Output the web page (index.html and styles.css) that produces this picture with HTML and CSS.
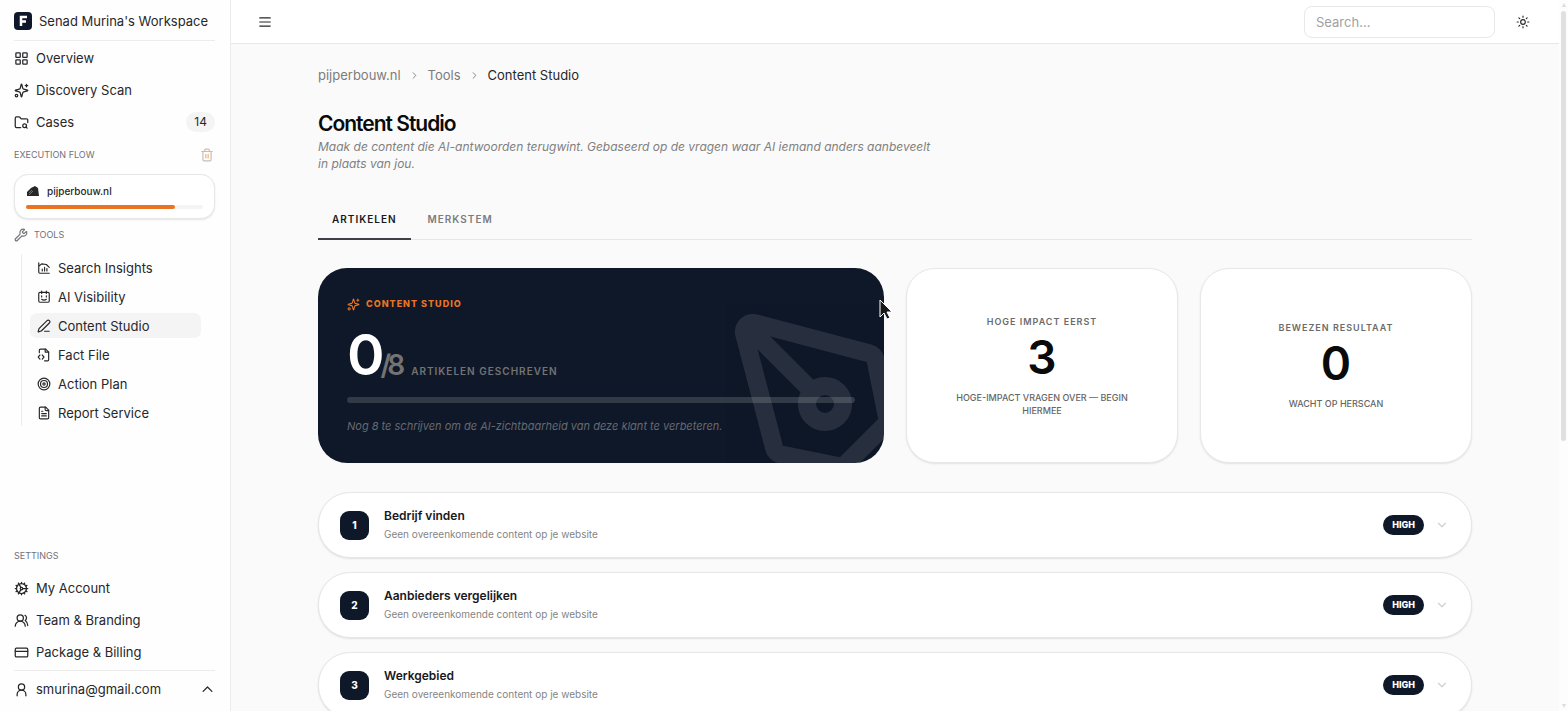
FILE: index.html
```
<!DOCTYPE html>
<html lang="nl">
<head>
    <meta charset="UTF-8">
    <meta name="viewport" content="width=device-width, initial-scale=1.0">
    <title>Content Studio</title>
    <link rel="stylesheet" href="styles.css">
</head>
<body>

    <!-- icons that are used more than once -->
    <svg class="sprite" aria-hidden="true">
        <symbol id="sparkles" viewBox="0 0 24 24">
            <path d="M9.937 15.5A2 2 0 0 0 8.5 14.063l-6.135-1.582a.5.5 0 0 1 0-.962L8.5 9.936A2 2 0 0 0 9.937 8.5l1.582-6.135a.5.5 0 0 1 .963 0L14.063 8.5A2 2 0 0 0 15.5 9.937l6.135 1.581a.5.5 0 0 1 0 .964L15.5 14.063a2 2 0 0 0-1.437 1.437l-1.582 6.135a.5.5 0 0 1-.963 0z"/>
            <path d="M20 2v4M22 4h-4"/><circle cx="4" cy="20" r="2"/>
        </symbol>
        <symbol id="chevron-right" viewBox="0 0 24 24"><path d="m9 18 6-6-6-6"/></symbol>
        <symbol id="chevron-down" viewBox="0 0 24 24"><path d="m6 9 6 6 6-6"/></symbol>
    </svg>

    <div class="app">

        <!-- sidebar -->
        <aside class="sidebar">
            <div class="workspace">
                <svg class="logo" viewBox="0 0 18 18" aria-hidden="true">
                    <rect width="18" height="18" rx="4" fill="#0f172a"/>
                    <path d="M7 14V5h6M7 9.500h5" fill="none" stroke="#fff" stroke-width="2.500"/>
                </svg>
                <span>Senad Murina's Workspace</span>
            </div>

            <nav class="nav">
                <a href="#" class="nav-link">
                    <svg class="icon" viewBox="0 0 24 24"><rect x="3" y="3" width="7" height="7" rx="1"/><rect x="14" y="3" width="7" height="7" rx="1"/><rect x="14" y="14" width="7" height="7" rx="1"/><rect x="3" y="14" width="7" height="7" rx="1"/></svg>
                    Overview
                </a>
                <a href="#" class="nav-link">
                    <svg class="icon"><use href="#sparkles"/></svg>
                    Discovery Scan
                </a>
                <a href="#" class="nav-link">
                    <svg class="icon" viewBox="0 0 24 24"><path d="M10.700 20H4a2 2 0 0 1-2-2V5a2 2 0 0 1 2-2h3.900a2 2 0 0 1 1.690.9l.81 1.200a2 2 0 0 0 1.670.9H20a2 2 0 0 1 2 2v4.100"/><path d="m21 21-1.900-1.900"/><circle cx="17" cy="17" r="3"/></svg>
                    Cases
                    <span class="count">14</span>
                </a>
            </nav>

            <div class="section-head">
                <span>EXECUTION FLOW</span>
                <button type="button" class="icon-btn trash" aria-label="Verwijderen">
                    <svg class="icon" viewBox="0 0 24 24"><path d="M3 6h18M19 6v14a2 2 0 0 1-2 2H7a2 2 0 0 1-2-2V6M8 6V4a2 2 0 0 1 2-2h4a2 2 0 0 1 2 2v2"/><path class="trash-bars" d="M10 11v6M14 11v6"/></svg>
                </button>
            </div>

            <a href="#" class="case-card">
                <span class="case-name">
                    <svg class="case-logo" viewBox="0 0 14 12" aria-hidden="true"><path d="M1 11V7l4-4 4-2 3 2 1 8z" fill="#27272a"/><path d="M3 8l3-3M3 10l4-4" stroke="#71717a" stroke-width="1"/></svg>
                    pijperbouw.nl
                </span>
                <span class="case-bar"><span class="case-fill"></span></span>
            </a>

            <div class="section-head tools-head">
                <svg class="icon" viewBox="0 0 24 24"><path d="M14.700 6.300a1 1 0 0 0 0 1.400l1.600 1.600a1 1 0 0 0 1.400 0l3.106-3.105c.32-.322.863-.22.983.218a6 6 0 0 1-8.259 7.057l-7.910 7.910a1 1 0 0 1-2.999-3l7.910-7.910a6 6 0 0 1 7.057-8.259c.438.12.54.662.219.984z"/></svg>
                <span>TOOLS</span>
            </div>

            <nav class="tree">
                <a href="#" class="tree-link">
                    <svg class="icon" viewBox="0 0 24 24"><path d="M3 3v16a2 2 0 0 0 2 2h16M3 9l5-4 8 1 5 5M9 17v-3M13 17v-6M17 17v-4"/></svg>
                    Search Insights
                </a>
                <a href="#" class="tree-link">
                    <svg class="icon" viewBox="0 0 24 24"><rect x="3" y="4" width="18" height="17" rx="2"/><path d="M8 2v4M16 2v4M8 10v2M16 10v2M8 16c2 1.500 6 1.500 8 0"/></svg>
                    AI Visibility
                </a>
                <a href="#" class="tree-link active">
                    <svg class="icon" viewBox="0 0 24 24"><path d="M13 21h8"/><path d="M21.174 6.812a1 1 0 0 0-3.986-3.987L3.842 16.174a2 2 0 0 0-.5.830l-1.321 4.352a.5.5 0 0 0 .623.622l4.353-1.320a2 2 0 0 0 .83-.497z"/></svg>
                    Content Studio
                </a>
                <a href="#" class="tree-link">
                    <svg class="icon" viewBox="0 0 24 24"><path d="M4 8V4a2 2 0 0 1 2-2h9l5 5v13a2 2 0 0 1-2 2h-5"/><path d="M14 2v5h6M5 12l-3 3.500L5 19M9 12l3 3.500L9 19"/></svg>
                    Fact File
                </a>
                <a href="#" class="tree-link">
                    <svg class="icon" viewBox="0 0 24 24"><circle cx="12" cy="12" r="10"/><circle cx="12" cy="12" r="6"/><circle cx="12" cy="12" r="2"/></svg>
                    Action Plan
                </a>
                <a href="#" class="tree-link">
                    <svg class="icon" viewBox="0 0 24 24"><path d="M15 2H6a2 2 0 0 0-2 2v16a2 2 0 0 0 2 2h12a2 2 0 0 0 2-2V7z"/><path d="M14 2v4a2 2 0 0 0 2 2h4M10 9H8M16 13H8M16 17H8"/></svg>
                    Report Service
                </a>
            </nav>

            <div class="sidebar-bottom">
                <div class="section-head">SETTINGS</div>
                <nav class="nav">
                    <a href="#" class="nav-link">
                        <svg class="icon" viewBox="0 0 24 24"><circle cx="12" cy="12" r="8"/><circle cx="12" cy="12" r="2"/><path d="M12 2v2M12 20v2M2 12h2M14 12h8M17 20.660l-1-1.730M11 10.270 7 3.340M20.660 17l-1.730-1M3.340 7l1.730 1M20.660 7l-1.730 1M3.340 17l1.730-1M17 3.340l-1 1.730M11 13.730l-4 6.930"/></svg>
                        My Account
                    </a>
                    <a href="#" class="nav-link">
                        <svg class="icon" viewBox="0 0 24 24"><path d="M18 21a8 8 0 0 0-16 0"/><circle cx="10" cy="8" r="5"/><path d="M22 20c0-3.370-2-6.500-4-8a5 5 0 0 0-.45-8.300"/></svg>
                        Team &amp; Branding
                    </a>
                    <a href="#" class="nav-link">
                        <svg class="icon" viewBox="0 0 24 24"><rect x="2" y="5" width="20" height="14" rx="2"/><path d="M2 10h20"/></svg>
                        Package &amp; Billing
                    </a>
                </nav>
                <button type="button" class="user">
                    <svg class="icon" viewBox="0 0 24 24"><circle cx="12" cy="8" r="5"/><path d="M5 22v-2a7 7 0 0 1 14 0v2"/></svg>
                    smurina@gmail.com
                    <svg class="icon user-caret" viewBox="0 0 24 24"><path d="m5 15 7-7 7 7"/></svg>
                </button>
            </div>
        </aside>

        <div class="page">
            <header class="topbar">
                <button type="button" class="icon-btn" aria-label="Menu">
                    <svg class="icon" viewBox="0 0 24 24"><path d="M3 5h18M3 12h18M3 19h18"/></svg>
                </button>
                <input type="search" class="search" placeholder="Search..." aria-label="Search">
                <button type="button" class="icon-btn" aria-label="Thema">
                    <svg class="icon" viewBox="0 0 24 24"><circle cx="12" cy="12" r="4"/><path d="M12 2v2M12 20v2M4.930 4.930l1.410 1.410M17.660 17.660l1.410 1.410M2 12h2M20 12h2M6.340 17.660l-1.410 1.410M19.070 4.930l-1.410 1.410"/></svg>
                </button>
            </header>

            <main class="content">
                <nav class="breadcrumb" aria-label="Breadcrumb">
                    <a href="#">pijperbouw.nl</a>
                    <svg class="icon"><use href="#chevron-right"/></svg>
                    <a href="#">Tools</a>
                    <svg class="icon"><use href="#chevron-right"/></svg>
                    <span class="current">Content Studio</span>
                </nav>

                <h1>Content Studio</h1>
                <p class="intro">Maak de content die AI-antwoorden terugwint. Gebaseerd op de vragen waar AI iemand anders aanbeveelt in plaats van jou.</p>

                <div class="tabs" role="tablist">
                    <button type="button" class="tab selected" role="tab" aria-selected="true">ARTIKELEN</button>
                    <button type="button" class="tab" role="tab" aria-selected="false">MERKSTEM</button>
                </div>

                <section class="stats">
                    <div class="hero">
                        <div class="hero-inner">
                            <svg class="hero-pen" viewBox="0 0 24 24" aria-hidden="true"><path d="M15.707 21.293a1 1 0 0 1-1.414 0l-1.586-1.586a1 1 0 0 1 0-1.414l5.586-5.586a1 1 0 0 1 1.414 0l1.586 1.586a1 1 0 0 1 0 1.414z"/><path d="m18 13-1.375-6.874a1 1 0 0 0-.746-.776L3.235 2.028a1 1 0 0 0-1.207 1.207L5.350 15.879a1 1 0 0 0 .776.746L13 18"/><path d="m2.300 2.300 7.286 7.286"/><circle cx="11" cy="11" r="2"/></svg>
                            <div class="hero-label">
                                <svg class="icon"><use href="#sparkles"/></svg>
                                CONTENT STUDIO
                            </div>
                            <div class="hero-count">
                                <div class="score"><span class="done">0</span><span class="total">/8</span></div>
                                <span class="hero-unit">ARTIKELEN GESCHREVEN</span>
                            </div>
                            <div class="hero-bar"></div>
                            <p class="hero-note">Nog 8 te schrijven om de AI-zichtbaarheid van deze klant te verbeteren.</p>
                        </div>
                        <!-- pointer -->
                        <svg class="pointer" viewBox="0 0 14 21" aria-hidden="true"><path d="M1 1v17l4-4 3 6 3-1-3-6h5z" fill="#18181b" stroke="#fff" stroke-width="1"/></svg>
                    </div>
                    <div class="stat">
                        <h2>HOGE IMPACT EERST</h2>
                        <strong>3</strong>
                        <p>HOGE-IMPACT VRAGEN OVER — BEGIN HIERMEE</p>
                    </div>
                    <div class="stat">
                        <h2>BEWEZEN RESULTAAT</h2>
                        <strong>0</strong>
                        <p>WACHT OP HERSCAN</p>
                    </div>
                </section>

                <section class="articles">
                    <button type="button" class="article">
                        <span class="number">1</span>
                        <span class="article-text">
                            <span class="article-title">Bedrijf vinden</span>
                            <span class="article-sub">Geen overeenkomende content op je website</span>
                        </span>
                        <span class="badge">HIGH</span>
                        <svg class="icon"><use href="#chevron-down"/></svg>
                    </button>
                    <button type="button" class="article">
                        <span class="number">2</span>
                        <span class="article-text">
                            <span class="article-title">Aanbieders vergelijken</span>
                            <span class="article-sub">Geen overeenkomende content op je website</span>
                        </span>
                        <span class="badge">HIGH</span>
                        <svg class="icon"><use href="#chevron-down"/></svg>
                    </button>
                    <button type="button" class="article">
                        <span class="number">3</span>
                        <span class="article-text">
                            <span class="article-title">Werkgebied</span>
                            <span class="article-sub">Geen overeenkomende content op je website</span>
                        </span>
                        <span class="badge">HIGH</span>
                        <svg class="icon"><use href="#chevron-down"/></svg>
                    </button>
                </section>
            </main>
        </div>

        <div class="scrollbar" aria-hidden="true">
            <span class="arrow up"></span>
            <span class="thumb"></span>
            <span class="arrow down"></span>
        </div>
    </div>

</body>
</html>
```
FILE: styles.css
```
* {
    box-sizing: border-box;
}

body {
    margin: 0;
    font-family: Inter, "Liberation Sans", sans-serif;
    font-size: 13px;
    line-height: 18px;
    color: #27272a;
    background: #fafafa;
}

a {
    color: inherit;
    text-decoration: none;
}

button, input {
    font: inherit;
    color: inherit;
}

button {
    padding: 0;
    border: none;
    background: none;
    cursor: pointer;
}

h1, h2, p {
    margin: 0;
}

.sprite {
    position: absolute;
    width: 0;
    height: 0;
}

.icon {
    flex: none;
    width: 14px;
    height: 14px;
    fill: none;
    stroke: currentColor;
    stroke-width: 2;
    stroke-linecap: round;
    stroke-linejoin: round;
}

.app {
    display: flex;
    height: 100vh;
    overflow: hidden;
}

/* sidebar */
.sidebar {
    display: flex;
    flex-direction: column;
    flex: none;
    width: 231px;
    padding: 0 15px 0 14px;
    background: #fefefe;
    border-right: 1px solid #ececec;
}

.workspace {
    display: flex;
    align-items: center;
    gap: 7px;
    height: 41px;
    padding-top: 2px;
    border-bottom: 1px solid #ececec;
}

.logo {
    width: 18px;
    height: 18px;
}

.nav {
    display: flex;
    flex-direction: column;
    padding: 1px 0;
}

.nav-link {
    display: flex;
    align-items: center;
    gap: 7px;
    height: 32px;
}

.nav-link .icon,
.user .icon {
    width: 15px;
    height: 15px;
}

.count {
    margin-left: auto;
    padding: 0 8px;
    border-radius: 10px;
    background: #f4f4f4;
    font-size: 12px;
    line-height: 20px;
}

.section-head {
    display: flex;
    align-items: center;
    justify-content: space-between;
    height: 32px;
    font-size: 9px;
    color: #71717a;
}

.icon-btn {
    display: flex;
    align-items: center;
    justify-content: center;
    width: 16px;
    height: 16px;
}

.trash {
    color: #c8bcb2;
}

.trash-bars {
    stroke: #f0b078;
}

.case-card {
    display: flex;
    flex-direction: column;
    gap: 5px;
    margin-top: 3px;
    padding: 7px 11px 9px;
    border: 1px solid #e7e7e7;
    border-radius: 14px;
    background: #fff;
    box-shadow: 0 1px 2px #0000001a;
}

.case-name {
    display: flex;
    align-items: center;
    gap: 7px;
    font-size: 10px;
    font-weight: 500;
}

.case-logo {
    width: 14px;
    height: 12px;
}

.case-bar {
    height: 4px;
    border-radius: 2px;
    background: #f4f4f4;
}

.case-fill {
    display: block;
    width: 84%;
    height: 4px;
    border-radius: 2px;
    background: #ea7423;
}

.tools-head {
    justify-content: flex-start;
    gap: 6px;
}

.tree {
    display: flex;
    flex-direction: column;
    gap: 4px;
    margin: 3px 14px 0 7px;
    padding: 1px 0 1px 8px;
    border-left: 1px solid #ececec;
}

.tree-link {
    display: flex;
    align-items: center;
    gap: 7px;
    height: 25px;
    padding-left: 7px;
    border-radius: 7px;
}

.tree-link.active {
    background: #f4f4f4;
}

.sidebar-bottom {
    margin-top: auto;
}

.sidebar-bottom .nav {
    padding: 0 0 2px;
}

.user {
    display: flex;
    align-items: center;
    gap: 7px;
    width: 100%;
    height: 41px;
    padding-bottom: 4px;
    border-top: 1px solid #ececec;
}

.user-caret {
    margin-left: auto;
}

/* top bar */
.page {
    display: flex;
    flex-direction: column;
    flex: 1;
    min-width: 0;
}

.topbar {
    display: flex;
    align-items: center;
    flex: none;
    gap: 20px;
    height: 44px;
    padding: 0 28px 0 26px;
    border-bottom: 1px solid #e8e8e8;
    background: #fff;
}

.search {
    width: 191px;
    height: 32px;
    margin-left: auto;
    padding: 0 11px;
    border: 1px solid #e8e8e8;
    border-radius: 8px;
    background: #fff;
    outline: none;
}

.search::placeholder {
    color: #a1a1a1;
}

/* content */
.content {
    width: 100%;
    max-width: 1194px;
    margin: 0 auto;
    padding: 22px 20px 0;
}

.breadcrumb {
    display: flex;
    align-items: center;
    gap: 8px;
    color: #7c7c7c;
}

.breadcrumb .icon {
    width: 11px;
    height: 11px;
}

.breadcrumb .current {
    color: #27272a;
}

h1 {
    margin-top: 26px;
    font-size: 21px;
    font-weight: 600;
    line-height: 28px;
    letter-spacing: -1px;
    color: #0a0a0a;
}

.intro {
    max-width: 616px;
    line-height: 17px;
    font-size: 12px;
    font-style: italic;
    color: #808080;
}

.tabs {
    display: flex;
    gap: 3px;
    margin-top: 28px;
    border-bottom: 1px solid #e6e6e6;
}

.tab {
    height: 40px;
    margin-bottom: -1px;
    padding: 0 14px;
    border-bottom: 2px solid transparent;
    font-size: 10px;
    font-weight: 600;
    letter-spacing: 1px;
    color: #7c7c7c;
}

.tab.selected {
    border-color: #3f3f46;
    color: #18181b;
}

/* stat cards */
.stats {
    display: grid;
    grid-template-columns: repeat(4, 1fr);
    gap: 22px;
    margin-top: 28px;
}

.hero {
    position: relative;
    grid-column: span 2;
}

.hero-inner {
    position: relative;
    height: 100%;
    padding: 27px 29px 28px;
    border-radius: 29px;
    background: #0f1829;
    overflow: hidden;
}

.hero-pen {
    position: absolute;
    right: -58px;
    bottom: -58px;
    width: 216px;
    height: 216px;
    fill: none;
    stroke: #fff;
    stroke-width: 2;
    stroke-linecap: round;
    stroke-linejoin: round;
    opacity: 0.1;
}

.hero-label {
    display: flex;
    align-items: center;
    gap: 6px;
    font-size: 9px;
    font-weight: 800;
    letter-spacing: 1px;
    color: #ea7423;
}

.hero-label .icon {
    width: 13px;
    height: 13px;
}

.hero-count {
    display: flex;
    align-items: baseline;
    gap: 10px;
    margin-top: 15px;
}

.score {
    display: flex;
    align-items: baseline;
    letter-spacing: -4px;
}

.done {
    font-size: 57px;
    font-weight: 600;
    line-height: 54px;
    color: #fff;
}

.total {
    font-size: 28px;
    font-weight: 600;
    line-height: 28px;
    color: #737373;
}

.hero-unit {
    font-size: 10px;
    font-weight: 600;
    letter-spacing: 1px;
    color: #737373;
}

.hero-bar {
    height: 6px;
    margin-top: 15px;
    border-radius: 3px;
    background: #ffffff26;
}

.hero-note {
    margin-top: 14px;
    font-size: 11px;
    font-style: italic;
    color: #666a70;
}

.pointer {
    position: absolute;
    top: 31px;
    right: -9px;
    width: 14px;
    height: 21px;
}

.stat {
    display: flex;
    flex-direction: column;
    align-items: center;
    justify-content: center;
    padding: 0 36px;
    border: 1px solid #e8e8e8;
    border-radius: 29px;
    background: #fff;
    box-shadow: 0 1px 2px #0000001a;
    text-align: center;
}

.stat h2 {
    font-size: 9px;
    font-weight: 600;
    line-height: 14px;
    letter-spacing: 1px;
    color: #6b6b6b;
}

.stat strong {
    margin: 6px 0 11px;
    font-size: 46px;
    font-weight: 600;
    line-height: 45px;
    color: #0a0a0a;
}

.stat p {
    font-size: 9px;
    font-weight: 500;
    line-height: 13px;
    color: #666;
}

/* article rows */
.articles {
    display: flex;
    flex-direction: column;
    gap: 14px;
    margin-top: 29px;
}

.article {
    display: flex;
    align-items: center;
    height: 66px;
    padding: 0 22px 0 21px;
    border: 1px solid #e6e6e6;
    border-radius: 32px;
    background: #fff;
    box-shadow: 0 1px 2px #0000001a;
    text-align: left;
}

.number {
    width: 29px;
    margin-right: 15px;
    border-radius: 9px;
    background: #0f1829;
    color: #fff;
    font-size: 10px;
    font-weight: 800;
    line-height: 29px;
    text-align: center;
}

.article-text {
    display: flex;
    flex-direction: column;
    flex: 1;
}

.article-title {
    font-size: 12px;
    font-weight: 600;
    color: #18181b;
}

.article-sub {
    font-size: 10px;
    color: #858585;
}

.badge {
    margin-right: 11px;
    padding: 0 9px;
    border-radius: 10px;
    background: #0f1829;
    color: #fff;
    font-size: 9px;
    font-weight: 800;
    line-height: 20px;
}

.article .icon {
    color: #cfcfcf;
}

/* scroll bar */
.scrollbar {
    display: flex;
    flex-direction: column;
    align-items: center;
    flex: none;
    width: 9px;
    padding: 3px 0;
    background: #fdfdfd;
}

.thumb {
    width: 5px;
    height: 61%;
    margin-top: 4px;
    border-radius: 3px;
    background: #e0e0e0;
}

.arrow {
    border: 2px solid transparent;
}

.arrow.up {
    border-top: none;
    border-bottom: 4px solid #dcdcdc;
}

.arrow.down {
    margin-top: auto;
    border-bottom: none;
    border-top: 4px solid #dcdcdc;
}
```
